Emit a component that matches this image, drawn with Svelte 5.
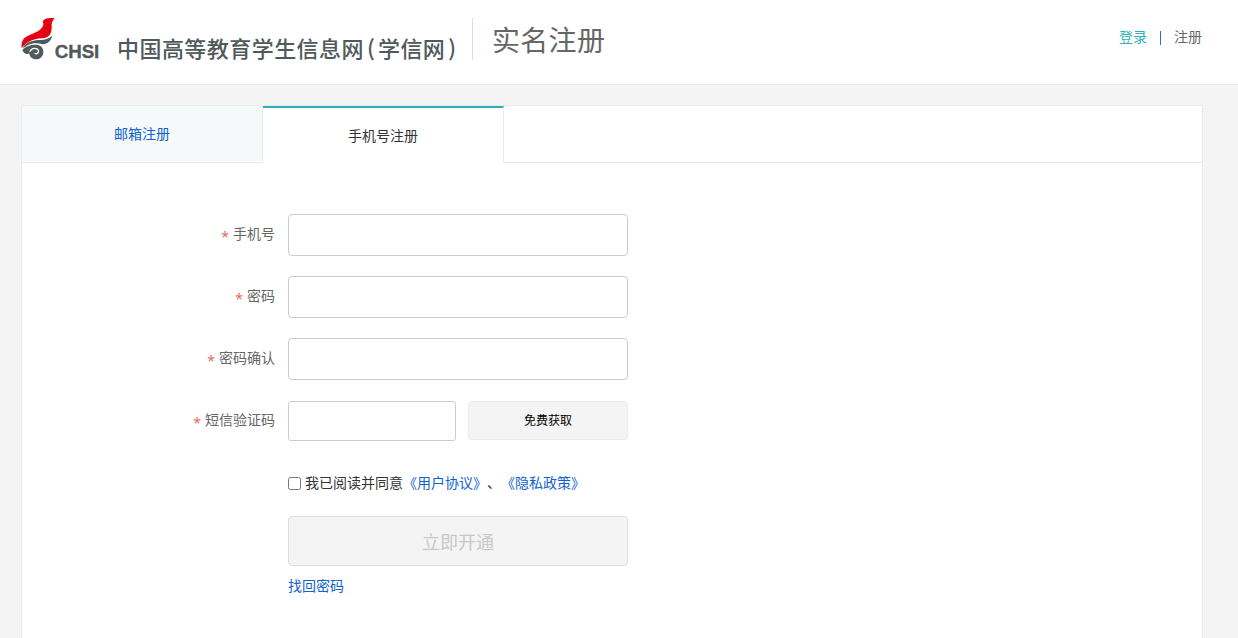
<script>
  const fields = [
    { id: 'phone', label: '手机号', type: 'text' },
    { id: 'password', label: '密码', type: 'password' },
    { id: 'confirm', label: '密码确认', type: 'password' }
  ];
</script>

<header>
  <svg class="logo" viewBox="0 0 300 180" role="img" aria-label="CHSI">
    <path fill="#e50012" d="M86 35C89 25 104 22 122 25C115 31 112 40 113 53C113 73 103 84 82 85C56 87 37 96 23 115C21 96 27 84 42 77C59 69 71 66 81 56C89 48 90 42 86 35Z" />
    <path fill="#50595b" d="M30 107C43 94 60 90 80 90C95 89 106 85 115 77C111 93 102 100 86 103C72 99 55 98 42 105C36 108 31 112 27 115Z" />
    <path fill="#50595b" d="M25 120C35 108 53 103 68 104C80 105 88 113 88 125C88 139 78 148 66 148C54 148 46 140 46 130C40 135 29 132 25 120Z" />
    <path fill="none" stroke="#fff" stroke-width="4" stroke-linecap="round" d="M48 124C53 113 69 112 73 121C76 129 68 134 63 130" />
    <text x="122" y="145" textLength="134" lengthAdjust="spacingAndGlyphs">CHSI</text>
  </svg>
  <div class="brand"><span>中国高等教育学生信息网</span><i class="open">(</i><span>学信网</span><i class="close">)</i></div>
  <h1>实名注册</h1>
  <nav><a class="login" href="#login">登录</a><b></b><a href="#register">注册</a></nav>
</header>

<main>
  <div class="tabs">
    <a class="tab" href="#email">邮箱注册</a>
    <a class="tab active" href="#phone">手机号注册</a>
    <div class="rest"></div>
  </div>
  <form>
    {#each fields as field}
      <div class="row">
        <label for={field.id}><em>*</em>{field.label}</label>
        <input class="text" id={field.id} type={field.type} />
      </div>
    {/each}
    <div class="row sms">
      <label for="code"><em>*</em>短信验证码</label>
      <input class="text" id="code" type="text" />
      <button class="fetch" type="button">免费获取</button>
    </div>
    <div class="agree">
      <input id="agree" type="checkbox" /><label for="agree">我已阅读并同意</label><a href="#terms">《用户协议》</a>、<a href="#privacy">《隐私政策》</a>
    </div>
    <button class="submit" type="button" disabled>立即开通</button>
    <a class="find" href="#find">找回密码</a>
  </form>
</main>

<style>
  :global(body) {
    background: #f4f4f4;
    overflow: hidden;
  }
  :global(#app) {
    font: 14px/20px "Noto Sans CJK SC", sans-serif;
    color: #333;
    text-spacing-trim: space-all;
  }
  * { box-sizing: border-box; }
  a { color: #1062cc; text-decoration: none; }
  header {
    height: 85px;
    background: #fff;
    border-bottom: 1px solid #e8e8e8;
    display: flex;
    align-items: flex-start;
    padding: 0 36px 0 14px;
  }
  .logo { width: 100px; height: 60px; margin-top: 10px; flex: none; }
  .logo text {
    font: bold 56px "Liberation Sans", sans-serif;
    fill: #50595b;
    stroke: #50595b;
    stroke-width: 1;
  }
  .brand {
    display: flex;
    width: 359px;
    height: 42px;
    margin-top: 18px;
    padding: 14px 0 0 3px;
    border-right: 1px solid #ddd;
    font-size: 22px;
    line-height: 30px;
    font-weight: 500;
    letter-spacing: 0.45px;
    color: #50595b;
    white-space: nowrap;
  }
  .brand i { font-style: normal; font-weight: 500; letter-spacing: 0; line-height: 28px; }
  .open { width: 14px; padding-left: 3px; }
  .close { padding-left: 3px; }
  h1 {
    margin: 19px 0 0 19px;
    font-size: 28px;
    line-height: 40px;
    font-weight: 400;
    color: #666;
    letter-spacing: 0.3px;
  }
  nav { display: flex; margin: 26px 0 0 auto; }
  nav a { color: #666; }
  nav .login { color: #2eafbb; }
  nav b { width: 1px; height: 14px; margin: 5px 13px 0; background: #2878b8; }
  main {
    height: 533px;
    margin: 20px 35px 0 21px;
    background: #fff;
    border: 1px solid #ebebeb;
    border-bottom: 0;
  }
  .tabs { display: flex; height: 57px; }
  .tab {
    width: 241px;
    border-right: 1px solid #ebebeb;
    border-bottom: 1px solid #ebebeb;
    background: linear-gradient(#f5f9fa 55px, #fff 55px);
    text-align: center;
    line-height: 54px;
  }
  .active {
    background: #fff;
    color: #333;
    border-top: 2px solid #2eafbb;
    border-bottom: 0;
  }
  .rest { flex: 1; border-bottom: 1px solid #ebebeb; }
  form { padding-top: 51px; }
  .row { display: flex; height: 42px; margin-bottom: 20px; }
  .row label {
    width: 253px;
    margin-right: 13px;
    text-align: right;
    line-height: 38px;
    color: #666;
  }
  em {
    display: inline-block;
    height: 20px;
    margin-right: 4px;
    color: #e66b5b;
    font: 14px/24px "Noto Sans", sans-serif;
    vertical-align: middle;
  }
  .text {
    width: 340px;
    height: 42px;
    margin: 0;
    border: 1px solid #ccc;
    border-radius: 4px;
    background: #fff;
  }
  .sms .text { width: 168px; height: 40px; margin-top: 1px; border-radius: 3px; }
  .fetch {
    width: 160px;
    height: 39px;
    margin: 1px 0 0 12px;
    padding: 0 0 1px;
    border: 1px solid #ebebeb;
    border-radius: 4px;
    background: #f4f4f4;
    color: #000;
    font: 12px/20px "Noto Sans CJK SC", sans-serif;
  }
  .agree { display: flex; align-items: center; height: 20px; margin: 30px 0 0 266px; }
  .agree input { width: 13px; height: 13px; margin: 2px 4px 0 0; }
  .submit {
    display: block;
    width: 340px;
    height: 50px;
    margin: 24px 0 9px 266px;
    padding: 0;
    border: 1px solid #ddd;
    border-radius: 4px;
    background: #f4f4f4;
    color: #c4c8cc;
    font: 18px/26px "Noto Sans CJK SC", sans-serif;
  }
  .find { display: block; margin-left: 266px; }
</style>
